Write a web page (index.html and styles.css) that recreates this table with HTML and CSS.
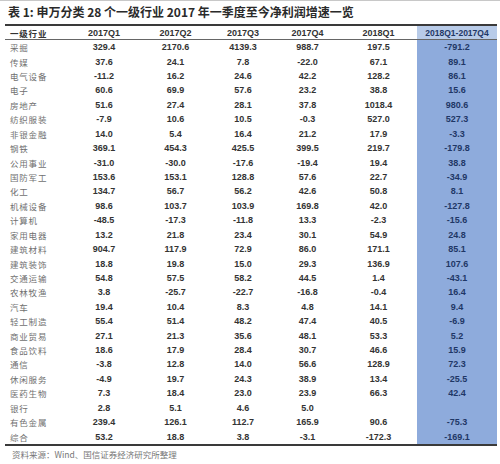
FILE: index.html
```html
<!DOCTYPE html>
<html lang="zh">
<head>
<meta charset="utf-8">
<link rel="stylesheet" href="styles.css">
</head>
<body>
<div class="page">
  <div class="title">表 1: 申万分类 28 个一级行业 2017 年一季度至今净利润增速一览</div>
  <div class="table" id="t">
    <div class="h lab">一级行业</div>
    <div class="h">2017Q1</div>
    <div class="h">2017Q2</div>
    <div class="h">2017Q3</div>
    <div class="h">2017Q4</div>
    <div class="h">2018Q1</div>
    <div class="h hl">2018Q1-2017Q4</div>
  </div>
  <div class="src">资料来源：Wind、国信证券经济研究所整理</div>
</div>
<script src="app.js"></script>
</body>
</html>
```
FILE: app.js
```js
var rows = [
["采掘","329.4","2170.6","4139.3","988.7","197.5","-791.2"],
["传媒","37.6","24.1","7.8","-22.0","67.1","89.1"],
["电气设备","-11.2","16.2","24.6","42.2","128.2","86.1"],
["电子","60.6","69.9","57.6","23.2","38.8","15.6"],
["房地产","51.6","27.4","28.1","37.8","1018.4","980.6"],
["纺织服装","-7.9","10.6","10.5","-0.3","527.0","527.3"],
["非银金融","14.0","5.4","16.4","21.2","17.9","-3.3"],
["钢铁","369.1","454.3","425.5","399.5","219.7","-179.8"],
["公用事业","-31.0","-30.0","-17.6","-19.4","19.4","38.8"],
["国防军工","153.6","153.1","128.8","57.6","22.7","-34.9"],
["化工","134.7","56.7","56.2","42.6","50.8","8.1"],
["机械设备","98.6","103.7","103.9","169.8","42.0","-127.8"],
["计算机","-48.5","-17.3","-11.8","13.3","-2.3","-15.6"],
["家用电器","13.2","21.8","23.4","30.1","54.9","24.8"],
["建筑材料","904.7","117.9","72.9","86.0","171.1","85.1"],
["建筑装饰","18.8","19.8","15.0","29.3","136.9","107.6"],
["交通运输","54.8","57.5","58.2","44.5","1.4","-43.1"],
["农林牧渔","3.8","-25.7","-22.7","-16.8","-0.4","16.4"],
["汽车","19.4","10.4","8.3","4.8","14.1","9.4"],
["轻工制造","55.4","51.4","48.2","47.4","40.5","-6.9"],
["商业贸易","27.1","21.3","35.6","48.1","53.3","5.2"],
["食品饮料","18.6","17.9","28.4","30.7","46.6","15.9"],
["通信","-3.8","12.8","14.0","56.6","128.9","72.3"],
["休闲服务","-4.9","19.7","24.3","38.9","13.4","-25.5"],
["医药生物","7.3","18.4","23.0","23.9","66.3","42.4"],
["银行","2.8","5.1","4.6","5.0","",""],
["有色金属","239.4","126.1","112.7","165.9","90.6","-75.3"],
["综合","53.2","18.8","3.8","-3.1","-172.3","-169.1"]
];
var t = document.getElementById("t");
rows.forEach(function (r, i) {
  r.forEach(function (v, j) {
    var d = document.createElement("div");
    var cls = "c";
    if (j === 0) cls += " lab";
    if (j === 6) cls += " hl";
    d.className = cls;
    d.textContent = v;
    t.appendChild(d);
  });
});
```
FILE: styles.css
```css
html, body {
  margin: 0;
  padding: 0;
  background: #fff;
}
.page {
  width: 500px;
  height: 464px;
  box-sizing: border-box;
  border-top: 1px solid #c8c8c8;
  padding: 0 3px 0 5px;
  font-family: "Liberation Sans", Arial, sans-serif;
}
.title {
  height: 23px;
  line-height: 22px;
  padding-left: 3px;
  font-family: "Noto Sans CJK SC", sans-serif;
  font-weight: 700;
  font-size: 12px;
  color: #2a2a2a;
  white-space: nowrap;
}
.table {
  display: grid;
  grid-template-columns: 63px 72px 71px 64px 65px 77px 80px;
  grid-template-rows: 14px;
  grid-auto-rows: 14.43px;
  border-top: 2px solid #3a3a3a;
  border-bottom: 2px solid #3a3a3a;
}
.table > div {
  display: flex;
  align-items: center;
  justify-content: center;
  white-space: nowrap;
}
.h {
  font-size: 9px;
  font-weight: 700;
  color: #333;
  border-bottom: 1px solid #666;
}
.c {
  font-size: 9px;
  font-weight: 700;
  color: #333;
}
.lab {
  justify-content: flex-start !important;
  padding-left: 5px;
  font-family: "Noto Sans CJK SC", sans-serif;
  font-weight: 400;
  font-size: 8.5px;
  letter-spacing: 0.8px;
  color: #707070;
}
.h.lab {
  color: #333;
  font-weight: 700;
}
.hl {
  background: #8eabdc;
  color: #1f3766;
}
.h.hl {
  background: #b8cbe8;
  font-size: 8.5px;
  color: #1f3766;
}
.src {
  padding: 2px 0 0 7px;
  font-family: "Noto Sans CJK SC", sans-serif;
  font-size: 8.5px;
  color: #777;
}
```
